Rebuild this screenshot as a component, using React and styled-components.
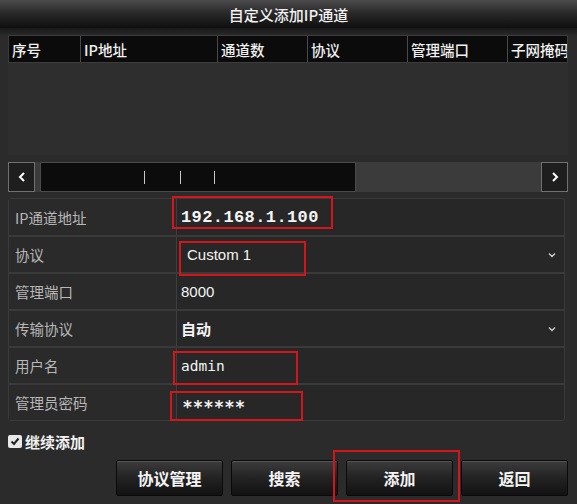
import React from 'react';
import styled, { createGlobalStyle } from 'styled-components';

const GlobalStyle = createGlobalStyle`
  body {
    margin: 0;
    background: #1c1c1c;
    font-family: "Noto Sans CJK SC", "Liberation Sans", sans-serif;
  }
`;

const Window = styled.div`
  width: 577px;
  height: 504px;
  background: #2a2a2a;
  display: flex;
  flex-direction: column;
  overflow: hidden;
  position: relative;
`;

const TitleBar = styled.div`
  height: 28px;
  flex: none;
  display: flex;
  align-items: center;
  justify-content: center;
  background: linear-gradient(#4c4c4c, #2a2a2a 45%, #0e0e0e);
  color: #f2f2f2;
  font-size: 15px;
  font-weight: 500;
`;

const Body = styled.div`
  flex: 1;
  display: flex;
  flex-direction: column;
  padding: 7px 9px 0 8px;
  background: linear-gradient(#181818, #2b2b2b 8px);
`;

const Table = styled.div`
  display: flex;
  flex-direction: column;
`;

const HeaderRow = styled.div`
  display: grid;
  grid-template-columns: 71px 137px 90px 100px 100px 62px;
  height: 28px;
  background: #0b0b0b;
  border: 1px solid #3c3c3c;
  box-sizing: border-box;
  overflow: hidden;
`;

const HeaderCell = styled.div`
  display: flex;
  align-items: center;
  padding-left: 3px;
  color: #f0f0f0;
  font-size: 14.5px;
  font-weight: 500;
  white-space: nowrap;
  overflow: hidden;
  border-left: ${(p) => (p.first ? 'none' : '1px solid #4a4a4a')};
`;

const TableBody = styled.div`
  height: 92px;
  background: #2e2e2e;
`;

const ScrollBar = styled.div`
  margin-top: 7px;
  height: 30px;
  box-sizing: border-box;
  display: flex;
  align-items: stretch;
  background: #3b3b3b;
`;

const ScrollButton = styled.div`
  width: 27px;
  flex: none;
  box-sizing: border-box;
  border: 1px solid #707070;
  background: #1e1e1e;
  display: flex;
  align-items: center;
  justify-content: center;
  color: #fff;
`;

const Track = styled.div`
  width: 314px;
  margin-left: 5px;
  background: #0c0c0c;
  border: 1px solid #4a4a4a;
  display: flex;
  align-items: center;
`;

const Tick = styled.span`
  width: 1px;
  height: 13px;
  background: #c8c8c8;
  margin-left: ${(p) => p.gap}px;
`;

const Spacer = styled.div`
  flex: 1;
`;

const Form = styled.div`
  margin-top: 6px;
  margin-right: 3px;
  border: 1px solid #3a3a3a;
  border-radius: 3px;
  background: #272727;
  display: flex;
  flex-direction: column;
`;

const Row = styled.div`
  height: ${(p) => (p.first ? 36 : 37)}px;
  box-sizing: border-box;
  display: grid;
  grid-template-columns: 168px 1fr;
  border-top: ${(p) => (p.first ? 'none' : '2px solid #3a3a3a')};
`;

const Label = styled.div`
  display: flex;
  align-items: center;
  padding-left: 6px;
  color: #b8b8b8;
  font-size: 14.5px;
  border-right: 1px solid #3e3e3e;
  background: #2a2a2a;
`;

const Value = styled.div`
  position: relative;
  display: flex;
  align-items: center;
  padding-left: ${(p) => p.pad || 4}px;
  padding-right: 8px;
  color: #f4f4f4;
  font-size: 15px;
  font-family: ${(p) =>
    p.mono
      ? '"Liberation Mono", "DejaVu Sans Mono", monospace'
      : p.dejavu
      ? '"DejaVu Sans Mono", monospace'
      : '"Liberation Sans", "Noto Sans CJK SC", sans-serif'};
  font-weight: ${(p) => (p.bold ? 700 : 400)};
  letter-spacing: ${(p) => p.spacing || 0}px;
`;

const Stars = styled.span`
  font-family: "DejaVu Sans", sans-serif;
  font-size: 17px;
  font-weight: 700;
  letter-spacing: 1.6px;
  transform: translateY(4px);
`;

const Chevron = styled.svg`
  margin-left: auto;
  width: 8px;
  height: 6px;
`;

const Mark = styled.span`
  position: absolute;
  left: ${(p) => p.x}px;
  top: ${(p) => p.y}px;
  width: ${(p) => p.w}px;
  height: ${(p) => p.h}px;
  border: 2.5px solid #d4151b;
  box-sizing: border-box;
  pointer-events: none;
`;

const CheckRow = styled.div`
  margin-top: 12px;
  height: 16px;
  display: flex;
  align-items: center;
  gap: 3px;
  color: #f2f2f2;
  font-size: 15px;
  font-weight: 700;
`;

const CheckBox = styled.span`
  width: 14px;
  height: 13px;
  background: #e8e8e8;
  border-radius: 2px;
  display: flex;
  align-items: center;
  justify-content: center;
`;

const ButtonBar = styled.div`
  margin-top: 11px;
  display: flex;
  justify-content: flex-end;
  gap: 8px;
`;

const ButtonWrap = styled.div`
  position: relative;
`;

const Button = styled.div`
  width: 107px;
  height: 36px;
  box-sizing: border-box;
  border: 1px solid #0a0a0a;
  border-radius: 2px;
  background: linear-gradient(#3c3c3c, #222 50%, #121212);
  color: #f4f4f4;
  font-size: 16px;
  font-weight: 700;
  display: flex;
  align-items: center;
  justify-content: center;
  box-shadow: inset 0 1px 0 #555;
`;

const down = (
  <Chevron viewBox="0 0 8 6">
    <path d="M1 1.5 L4 4.5 L7 1.5" stroke="#cfcfcf" strokeWidth="1.4" fill="none" />
  </Chevron>
);

const columns = ['序号', 'IP地址', '通道数', '协议', '管理端口', '子网掩码'];

export default function App() {
  return (
    <Window>
      <GlobalStyle />
      <TitleBar>自定义添加IP通道</TitleBar>
      <Body>
        <Table>
          <HeaderRow>
            {columns.map((c, i) => (
              <HeaderCell key={c} first={i === 0}>
                {c}
              </HeaderCell>
            ))}
          </HeaderRow>
          <TableBody />
          <ScrollBar>
            <ScrollButton>
              <svg width="8" height="10" viewBox="0 0 8 10">
                <path d="M6 1 L2 5 L6 9" stroke="#fff" strokeWidth="2" fill="none" />
              </svg>
            </ScrollButton>
            <Track>
              <Tick gap={103} />
              <Tick gap={35} />
              <Tick gap={33} />
            </Track>
            <Spacer />
            <ScrollButton>
              <svg width="8" height="10" viewBox="0 0 8 10">
                <path d="M2 1 L6 5 L2 9" stroke="#fff" strokeWidth="2" fill="none" />
              </svg>
            </ScrollButton>
          </ScrollBar>
        </Table>

        <Form>
          <Row first>
            <Label>IP通道地址</Label>
            <Value mono bold spacing={0.4} style={{ fontSize: 17 }}>
              192.168.1.100
              <Mark x={-5} y={-3} w={161} h={33} />
            </Value>
          </Row>
          <Row>
            <Label>协议</Label>
            <Value pad={10}>
              Custom 1
              {down}
              <Mark x={2} y={4} w={127} h={35} />
            </Value>
          </Row>
          <Row>
            <Label>管理端口</Label>
            <Value>8000</Value>
          </Row>
          <Row>
            <Label>传输协议</Label>
            <Value style={{ fontFamily: '"Noto Sans CJK SC", sans-serif', fontWeight: 700 }}>
              自动
              {down}
            </Value>
          </Row>
          <Row>
            <Label>用户名</Label>
            <Value dejavu style={{ fontSize: 14.5 }}>
              admin
              <Mark x={-4} y={3} w={125} h={34} />
            </Value>
          </Row>
          <Row>
            <Label>管理员密码</Label>
            <Value pad={6}>
              <Stars>******</Stars>
              <Mark x={-7} y={6} w={133} h={30} />
            </Value>
          </Row>
        </Form>

        <CheckRow>
          <CheckBox>
            <svg width="10" height="9" viewBox="0 0 10 9">
              <path d="M1.5 4.5 L4 7 L8.5 1.5" stroke="#222" strokeWidth="2" fill="none" />
            </svg>
          </CheckBox>
          继续添加
        </CheckRow>

        <ButtonBar>
          <Button>协议管理</Button>
          <Button>搜索</Button>
          <ButtonWrap>
            <Button>添加</Button>
            <Mark x={-13} y={-10} w={127} h={52} />
          </ButtonWrap>
          <Button>返回</Button>
        </ButtonBar>
      </Body>
    </Window>
  );
}
